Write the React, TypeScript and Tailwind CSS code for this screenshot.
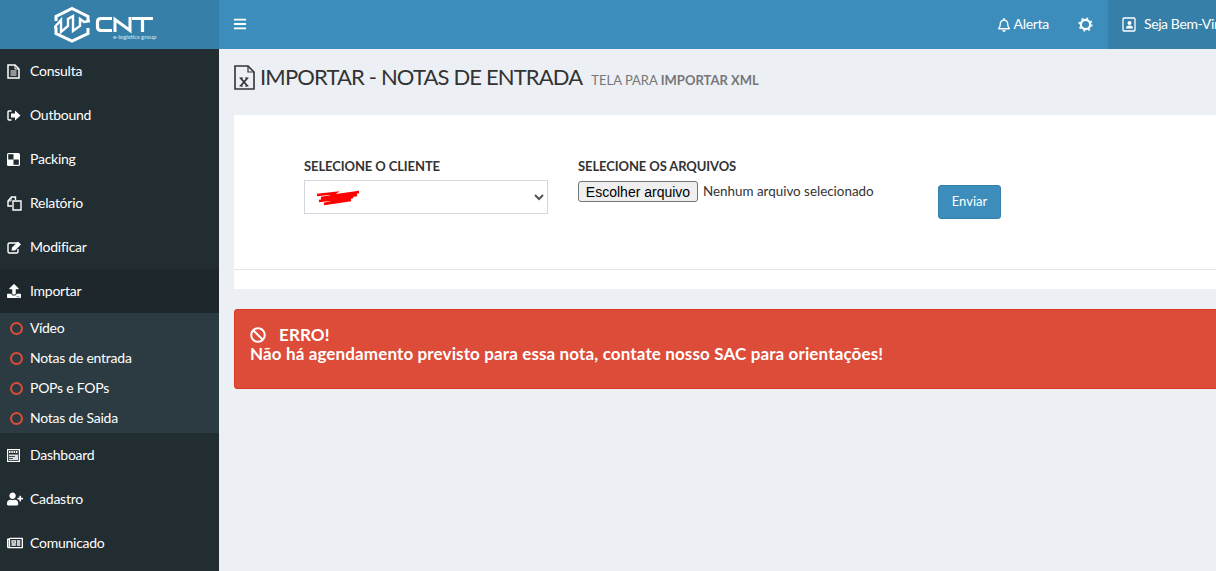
import { ReactNode } from 'react';
import { FaBan, FaBars, FaRegBell, FaRegNewspaper, FaUpload, FaUserPlus } from 'react-icons/fa';

// hand drawn icons, the package ones are a different (newer) cut
const FileIcon = () => (
  <svg width="13" height="15" viewBox="0 0 13 15" fill="none" stroke="white">
    <path d="M1 1H8L12 5V14H1Z" strokeWidth="1.5" />
    <path d="M8 1V5H12" strokeWidth="1" />
    <path d="M3.5 7H9.5M3.5 9H9.5M3.5 11H9.5" strokeWidth="1.2" />
  </svg>
);

const OutIcon = () => (
  <svg width="14" height="11" viewBox="0 0 14 11" fill="none">
    <path d="M4.5 1H2Q1 1 1 2V9Q1 10 2 10H4.5" stroke="white" strokeWidth="1.4" />
    <path d="M4 3.5H8V0.5L13.5 5.5L8 10.5V7.5H4Z" fill="white" />
  </svg>
);

const CheckerIcon = () => (
  <svg width="13" height="13" viewBox="0 0 13 13">
    <rect width="13" height="13" rx="1.5" fill="white" />
    <rect x="1.2" y="1.2" width="5.3" height="5.3" fill="#222d32" />
    <rect x="6.5" y="6.5" width="5.3" height="5.3" fill="#222d32" />
  </svg>
);

const CopyIcon = () => (
  <svg width="15" height="15" viewBox="0 0 15 15" fill="none" stroke="white" strokeWidth="1.4">
    <path d="M5 10H1V5L4.5 1H8.5V4" />
    <path d="M6 5H10.5L14 5V14H6Z" />
    <path d="M4 1.5V5H1" strokeWidth="1" />
  </svg>
);

const EditIcon = () => (
  <svg width="14" height="13" viewBox="0 0 14 13" fill="none">
    <path d="M10 2H2.5Q1 2 1 3.5V10.5Q1 12 2.5 12H9.5Q11 12 11 10.5V8" stroke="white" strokeWidth="1.4" />
    <path d="M4.5 9.5L5 6.5L11 0.5L14 3.5L8 9.5Z" fill="white" />
  </svg>
);

const BoardIcon = () => (
  <svg width="13" height="13" viewBox="0 0 13 13" fill="none">
    <rect x="0.6" y="0.6" width="11.8" height="11.8" stroke="white" strokeWidth="1.2" />
    <path d="M2 3H11" stroke="white" strokeWidth="2" strokeDasharray="1.5 0.8" />
    <rect x="2" y="5.5" width="9" height="5.5" fill="white" opacity="0.85" />
    <path d="M2 7.5H8M2 9.5H6" stroke="#222d32" strokeWidth="0.8" />
  </svg>
);

const GearIcon = () => (
  <svg width="15" height="15" viewBox="0 0 15 15" fill="none" stroke="white">
    <circle cx="7.5" cy="7.5" r="4.7" strokeWidth="2.2" />
    <circle cx="7.5" cy="7.5" r="6.4" strokeWidth="1.4" strokeDasharray="2 3.03" />
  </svg>
);

const ContactIcon = () => (
  <svg width="14" height="15" viewBox="0 0 14 15" fill="none">
    <rect x="1" y="1" width="12" height="13" rx="1" stroke="white" strokeWidth="1.3" />
    <circle cx="7.5" cy="6" r="2" fill="white" />
    <path d="M4 11.5Q4 8.5 7.5 8.5Q11 8.5 11 11.5Z" fill="white" />
  </svg>
);

const ExcelFileIcon = () => (
  <svg width="21" height="25" viewBox="0 0 21 25" fill="none" stroke="#333">
    <path d="M1 1H14L20 7V24H1Z" strokeWidth="1.6" />
    <path d="M14 1V7H20" strokeWidth="1.2" />
    <path d="M6.5 13L13.5 21M13.5 13L6.5 21" strokeWidth="1.8" />
    <path d="M5.5 13H9M11 13H14.5M5.5 21H9M11 21H14.5" strokeWidth="1" />
  </svg>
);

const NavItem = ({ icon, label, active }: { icon: ReactNode; label: string; active?: boolean }) => (
  <div className={`flex h-[44px] items-center pl-[7px] text-white ${active ? 'bg-[#1e282c]' : ''}`}>
    <span className="flex w-[23px] shrink-0 items-center">{icon}</span>
    <span className="mb-[2px] text-[14px] tracking-[-0.25px]">{label}</span>
  </div>
);

const SubItem = ({ label }: { label: string }) => (
  <div className="flex h-[30px] items-center pl-[10px] text-white">
    <span className="mr-[7px] h-[13px] w-[13px] shrink-0 rounded-full border-2 border-[#dd4b39]" />
    <span className="mb-[2px] text-[14px] tracking-[-0.25px]">{label}</span>
  </div>
);

const Logo = () => (
  <svg width="100" height="36" viewBox="0 0 100 36" fill="none" stroke="white">
    <path d="M2 14V9.5L18 1.5L34 9.5V15" strokeWidth="3" />
    <path d="M34 21V26.5L18 34L2 26.5V20" strokeWidth="3" />
    <path d="M0 21L7 13V25L14 19V12L19 9V24L26 19V12L30 15L36 14" strokeWidth="2.4" />
    <path d="M58 11.5H47Q43.5 11.5 43.5 15V20Q43.5 23.5 47 23.5H58" strokeWidth="3.2" />
    <path d="M61 25V12.5L76 23.5V10" strokeWidth="3" />
    <path d="M78 11.5H99M88.5 11.5V25" strokeWidth="3.2" />
  </svg>
);

export default function App() {
  return (
    <div className="flex h-[571px] w-[1216px] overflow-hidden bg-[#ecf0f5] font-['Lato','Noto_Sans',sans-serif] text-[14px] text-[#333]">
      <aside className="flex w-[219px] shrink-0 flex-col bg-[#222d32]">
        <div className="relative flex h-[49px] shrink-0 items-center bg-[#367fa9] pl-[54px]">
          <Logo />
          <span className="absolute left-[113px] top-[33px] text-[6px] leading-[8px] text-white/80">e-logistics group</span>
        </div>
        <NavItem icon={<FileIcon />} label="Consulta" />
        <NavItem icon={<OutIcon />} label="Outbound" />
        <NavItem icon={<CheckerIcon />} label="Packing" />
        <NavItem icon={<CopyIcon />} label="Relatório" />
        <NavItem icon={<EditIcon />} label="Modificar" />
        <NavItem icon={<FaUpload className="text-[14px]" />} label="Importar" active />
        <div className="bg-[#2c3b41]">
          <SubItem label="Vídeo" />
          <SubItem label="Notas de entrada" />
          <SubItem label="POPs e FOPs" />
          <SubItem label="Notas de Saida" />
        </div>
        <NavItem icon={<BoardIcon />} label="Dashboard" />
        <NavItem icon={<FaUserPlus className="text-[16px]" />} label="Cadastro" />
        <NavItem icon={<FaRegNewspaper className="text-[16px]" />} label="Comunicado" />
      </aside>

      <div className="flex min-w-0 flex-1 flex-col">
        <header className="flex h-[49px] shrink-0 items-center bg-[#3c8dbc] text-white">
          <span className="mb-[2px] ml-[14px] flex items-center text-[14px]">
            <FaBars />
          </span>
          <div className="ml-auto flex items-center gap-[3px]">
            <FaRegBell className="text-[14px]" />
            <span className="mb-[2px] tracking-[-0.3px]">Alerta</span>
          </div>
          <span className="mb-[1px] ml-[29px]">
            <GearIcon />
          </span>
          <div className="ml-[15px] flex h-full w-[108px] shrink-0 items-center overflow-hidden whitespace-nowrap bg-[#367fa9] pl-[14px]">
            <span className="mr-[8px] shrink-0">
              <ContactIcon />
            </span>
            <span className="mb-[2px] tracking-[-0.4px]">Seja Bem-Vindo</span>
          </div>
        </header>

        <div className="flex items-end pl-[15px] pt-[13px]">
          <span className="mb-[3px] mr-[5px] shrink-0">
            <ExcelFileIcon />
          </span>
          <h1 className="mb-[1px] text-[22px] leading-[30px] font-normal tracking-[-0.85px]">IMPORTAR - NOTAS DE ENTRADA</h1>
          <span className="mb-[3px] ml-[9px] text-[13px] text-[#777]">
            TELA PARA <b>IMPORTAR XML</b>
          </span>
        </div>

        <div className="mt-[22px] ml-[15px] w-[1000px] shrink-0 bg-white">
          <div className="flex h-[155px] border-b border-[#e5e5e5] pl-[70px] pt-[42px]">
            <div className="w-[244px]">
              <label className="block text-[13px] leading-[18px] font-bold tracking-[-0.1px]">SELECIONE O CLIENTE</label>
              <div className="relative mt-[5px]">
                <select className="h-[34px] w-full border border-[#d2d6de] bg-white px-[8px] text-[#555] outline-none">
                  <option></option>
                </select>
                <svg className="absolute left-[11px] top-[10px]" width="46" height="16" viewBox="0 0 46 16" fill="none">
                  <path
                    d="M2 5 L20 3 L16 6 L44 2 L6 8 L42 5 L4 11 L38 7 L9 14 L36 10 L14 13"
                    stroke="#f00"
                    strokeWidth="2.6"
                  />
                </svg>
              </div>
            </div>
            <div className="ml-[30px] w-[360px]">
              <label className="block text-[13px] leading-[18px] font-bold tracking-[-0.1px]">SELECIONE OS ARQUIVOS</label>
              <div className="mt-[6px] flex items-center">
                <button className="h-[21px] w-[120px] rounded-[3px] border border-[#767676] bg-[#efefef] font-['Liberation_Sans',sans-serif] text-[14px] leading-[18px] text-black">
                  Escolher arquivo
                </button>
                <span className="ml-[5px] text-[13.4px] text-[#333]">Nenhum arquivo selecionado</span>
              </div>
            </div>
            <button className="mt-[28px] h-[34px] w-[63px] rounded-[3px] border border-[#367fa9] bg-[#3c8dbc] text-[13px] text-white">
              Enviar
            </button>
          </div>
          <div className="h-[19px]" />
        </div>

        <div className="mt-[20px] ml-[15px] h-[80px] w-[1000px] shrink-0 rounded-[3px] border border-[#d73925] bg-[#dd4b39] pl-[15px] pt-[15px] text-[17px] leading-[20px] font-bold tracking-[0.13px] text-white">
          <div className="flex items-center">
            <FaBan className="mr-[13px] text-[16px]" />
            <span>ERRO!</span>
          </div>
          <div className="-mt-[1px]">Não há agendamento previsto para essa nota, contate nosso SAC para orientações!</div>
        </div>
      </div>
    </div>
  );
}
